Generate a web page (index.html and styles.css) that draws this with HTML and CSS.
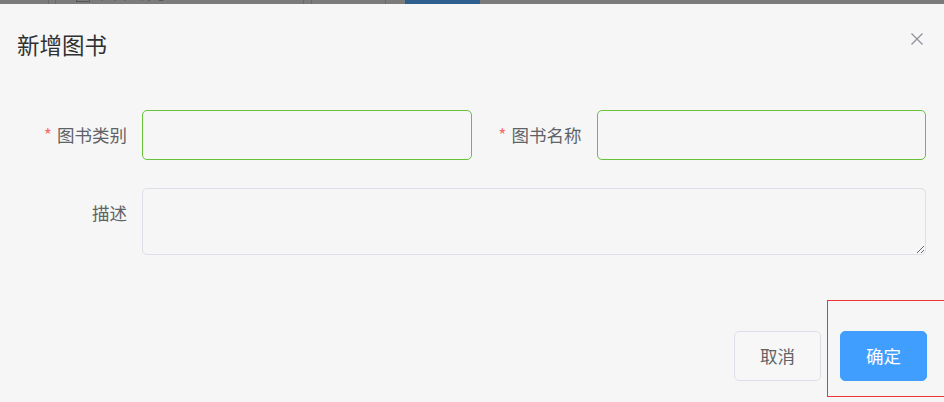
FILE: index.html
```html
<!DOCTYPE html>
<html lang="zh-CN">
<head>
<meta charset="utf-8">
<title>新增图书</title>
<link rel="stylesheet" href="styles.css">
</head>
<body>
<div class="strip">
  <div class="strip-row">
    <div class="s-edge"></div>
    <div class="s-input"><span class="s-icon"></span><span class="s-text">图书编号</span></div>
    <div class="s-edge2"></div>
    <div class="s-btn">查询</div>
    <div class="s-blue">新增</div>
  </div>
</div>
<div class="dialog">
  <div class="header">
    <span class="title">新增图书</span>
    <button class="close" aria-label="关闭">
      <svg width="12" height="12" viewBox="0 0 12 12"><path d="M0.5 0.5L11.5 11.5M11.5 0.5L0.5 11.5" stroke="#909399" stroke-width="1.3" fill="none"/></svg>
    </button>
  </div>
  <div class="body">
    <div class="row">
      <div class="item half">
        <label class="label"><span class="req">*</span>图书类别</label>
        <div class="control"><input class="input ok" type="text"></div>
      </div>
      <div class="item half">
        <label class="label"><span class="req">*</span>图书名称</label>
        <div class="control"><input class="input ok" type="text"></div>
      </div>
    </div>
    <div class="row last">
      <div class="item full">
        <label class="label">描述</label>
        <div class="control"><textarea class="textarea"></textarea></div>
      </div>
    </div>
  </div>
  <div class="footer">
    <button class="btn">取消</button>
    <button class="btn primary">确定</button>
  </div>
  <div class="highlight"></div>
</div>
</body>
</html>
```
FILE: styles.css
```css
* { box-sizing: border-box; }
html, body {
  margin: 0;
  padding: 0;
  height: 100%;
  overflow: hidden;
  background: #f6f6f6;
  font-family: "Noto Sans CJK SC", "Noto Sans", sans-serif;
}
.strip {
  height: 4px;
  overflow: hidden;
  background: #7b7b7b;
}
.strip-row {
  display: flex;
  height: 30px;
  margin-top: -26px;
  padding-left: 48px;
}
.s-edge {
  width: 7px;
  border-left: 1px solid #6a6a6a;
}
.s-input {
  width: 249px;
  border-left: 1px solid #6a6a6a;
  border-right: 1px solid #6a6a6a;
  display: flex;
  align-items: flex-end;
  padding-left: 20px;
}
.s-icon {
  width: 14px;
  height: 14px;
  border: 1px solid #555;
  margin-bottom: 2px;
}
.s-text {
  margin-left: 10px;
  font-size: 17px;
  line-height: 24px;
  color: #5a5a5a;
}
.s-edge2 {
  width: 7px;
}
.s-btn {
  width: 75px;
  border-left: 1px solid #6a6a6a;
  border-right: 1px solid #6a6a6a;
  text-align: center;
  font-size: 17px;
  line-height: 24px;
  color: #303030;
}
.s-blue {
  width: 75px;
  margin-left: 19px;
  background: #2f5f8f;
  color: #8aa2bb;
  text-align: center;
  font-size: 17px;
  line-height: 24px;
}
.dialog {
  position: relative;
  min-height: calc(100vh - 4px);
  background: #f6f6f6;
}
.header {
  display: flex;
  justify-content: space-between;
  align-items: flex-start;
  padding: 25px 21px 12px 17px;
}
.title {
  font-size: 22.5px;
  line-height: 30px;
  color: #303133;
}
.close {
  border: 0;
  background: none;
  padding: 0;
  margin-top: 4px;
  width: 12px;
  height: 12px;
  display: flex;
}
.body {
  padding: 39px 18px 38px 17px;
}
.row {
  display: flex;
  margin-bottom: 28px;
}
.item {
  display: flex;
}
.half { flex: 1 1 0; }
.full { flex: 1 1 auto; }
.label {
  width: 125px;
  flex: none;
  padding-right: 15px;
  text-align: right;
  font-size: 17.5px;
  line-height: 50px;
  color: #606266;
}
.req {
  color: #f56c6c;
  margin-right: 5px;
}
.control {
  flex: 1 1 auto;
  display: flex;
}
.input {
  width: 100%;
  height: 50px;
  border: 1px solid #dcdfe6;
  border-radius: 5px;
  background: transparent;
  padding: 0 15px;
  font: inherit;
  font-size: 17px;
  outline: none;
}
.input.ok {
  border-color: #67c23a;
}
.textarea {
  width: 100%;
  height: 67px;
  border: 1px solid #dcdfe6;
  border-radius: 5px;
  background: transparent;
  padding: 6px 15px;
  font: inherit;
  font-size: 17px;
  resize: vertical;
  outline: none;
  display: block;
}
.footer {
  display: flex;
  justify-content: flex-end;
  gap: 19px;
  padding: 10px 17px 25px;
}
.btn {
  height: 50px;
  padding: 0 25px;
  border: 1px solid #dcdfe6;
  border-radius: 5px;
  background: #f7f7f7;
  color: #606266;
  font: inherit;
  font-size: 17.5px;
  line-height: 1;
}
.btn.primary {
  background: #409eff;
  border-color: #409eff;
  color: #ffffff;
}
.highlight {
  position: absolute;
  left: 827px;
  top: 296px;
  right: -10px;
  height: 97px;
  border: 1px solid #f03434;
  pointer-events: none;
}
```
